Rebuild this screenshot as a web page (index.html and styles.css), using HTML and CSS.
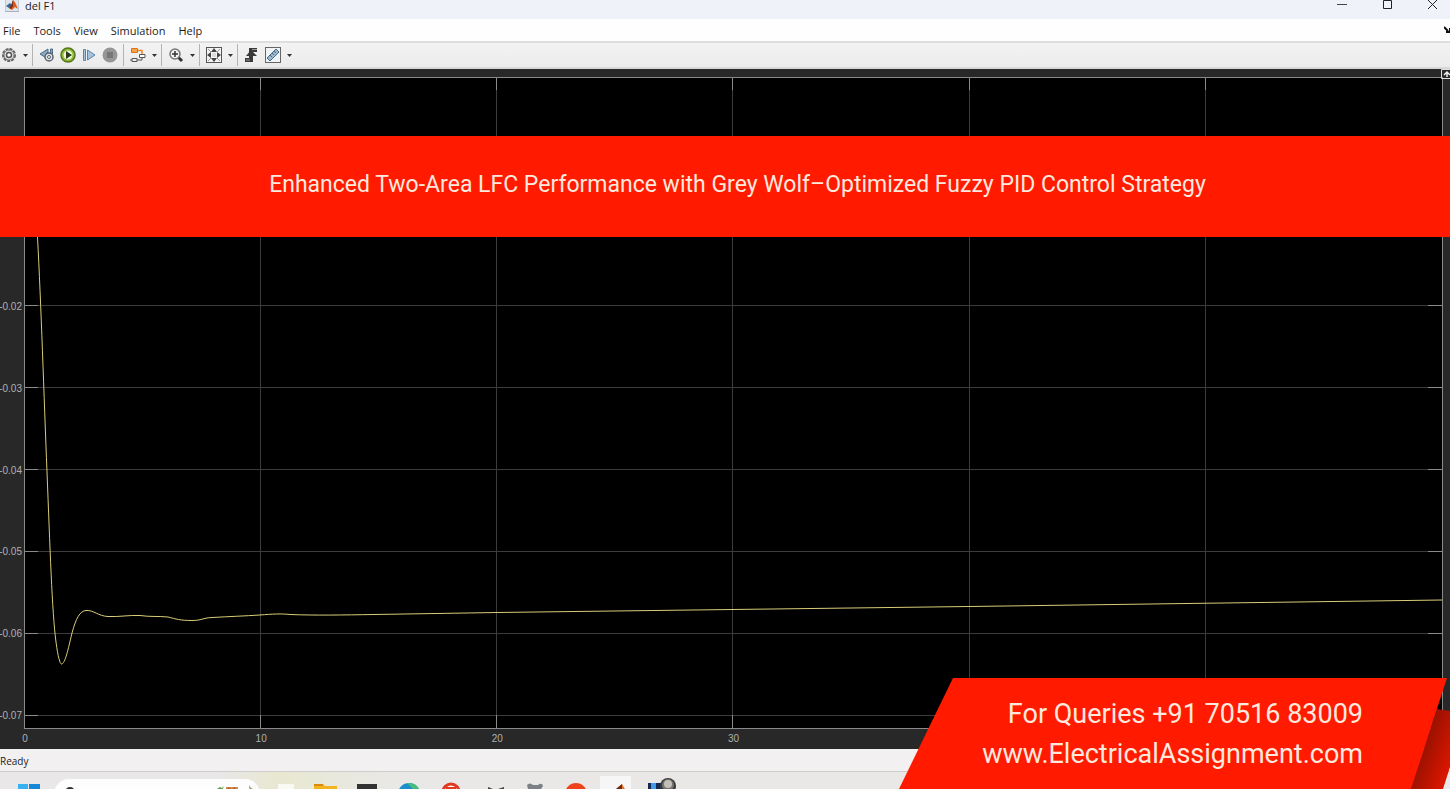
FILE: index.html
```html
<!DOCTYPE html>
<html lang="en">
<head>
<meta charset="utf-8">
<title>del F1</title>
<link rel="stylesheet" href="styles.css">
</head>

<body>
<header class="titlebar">
  <svg class="app-icon" width="14" height="12" viewBox="0 0 14 12">
    <rect width="14" height="12" fill="#dfe5ec"/>
    <path d="M0 0V11.5H14V0" fill="none" stroke="#a9b0ba"/>
    <path d="M1 6L5 3L7 5L4 8Z" fill="#36669a"/>
    <path d="M4 8Q7 5 8 0Q10 1 13 9L10 7L7 10Z" fill="#d85a1e"/>
    <path d="M4 8Q7 5 8 0L8 6L6 9Z" fill="#7b2c16"/>
  </svg>
  <span class="title">del F1</span>
  <div class="window-buttons">
    <button type="button" aria-label="Minimize"><svg width="12" height="10" viewBox="0 0 12 10"><path d="M1 4.5H11" stroke="#444"/></svg></button>
    <button type="button" aria-label="Maximize"><svg width="12" height="10" viewBox="0 0 12 10"><path d="M2.5 .5H10.500V8.500H2.500Z" fill="none" stroke="#222"/></svg></button>
    <button type="button" aria-label="Close"><svg width="12" height="10" viewBox="0 0 12 10"><path d="M2 0L11 9M11 0L2 9" stroke="#222"/></svg></button>
  </div>
</header>

<nav class="menubar">
  <button type="button">File</button>
  <button type="button">Tools</button>
  <button type="button">View</button>
  <button type="button">Simulation</button>
  <button type="button">Help</button>
  <svg class="dock" width="6" height="8" viewBox="0 0 6 8"><path d="M0 1L4 5M6 2V6H2" fill="none" stroke="#111" stroke-width="2"/></svg>
</nav>

<div class="toolbar">
  <div class="group">
    <div class="split">
      <button type="button" class="tool" aria-label="Settings">
        <svg width="16" height="16" viewBox="0 0 16 16">
          <circle cx="8" cy="8" r="6" fill="#ddd" stroke="#666" stroke-width="2" stroke-dasharray="3 1"/>
          <circle cx="8" cy="8" r="5" fill="#e4e4e4" stroke="#777"/>
          <circle cx="8" cy="8" r="2.500" fill="#fff" stroke="#555" stroke-width="1.500"/>
        </svg>
      </button>
      <button type="button" class="drop" aria-label="Settings menu"><svg width="5" height="3" viewBox="0 0 5 3"><path d="M0 0H5L2.500 3Z"/></svg></button>
    </div>
  </div>
  <div class="group">
    <button type="button" class="tool" aria-label="Step back options">
      <svg width="16" height="16" viewBox="0 0 16 16">
        <path d="M1 7L9 2V12Z" fill="#8aa9c4" stroke="#4d6b86"/>
        <path d="M11.500 2H13.500V8H11.500Z" fill="#8aa9c4" stroke="#4d6b86"/>
        <circle cx="10" cy="10" r="4" fill="#dfe3e6" stroke="#56636e" stroke-width="1.500"/>
        <circle cx="10" cy="10" r="1.500" fill="#fff" stroke="#56636e"/>
      </svg>
    </button>
    <button type="button" class="tool" aria-label="Run">
      <svg width="16" height="16" viewBox="0 0 16 16">
        <circle cx="8" cy="8" r="7" fill="#8dbb35" stroke="#55761c" stroke-width="1.500"/>
        <circle cx="8" cy="8" r="4.500" fill="#eef5d8"/>
        <path d="M6 4L12 8L6 12Z" fill="#2b3d18"/>
      </svg>
    </button>
    <button type="button" class="tool" aria-label="Step forward">
      <svg width="16" height="16" viewBox="0 0 16 16">
        <path d="M2.500 2.500H4.500V13.500H2.500Z" fill="#a9c6df" stroke="#5d83a5"/>
        <path d="M6.500 3L14 8L6.500 13Z" fill="#a3c4e0" stroke="#5d83a5"/>
      </svg>
    </button>
    <button type="button" class="tool" aria-label="Stop">
      <svg width="16" height="16" viewBox="0 0 16 16">
        <circle cx="8" cy="8" r="7.500" fill="#969696"/>
        <rect x="5" y="5" width="6" height="6" fill="#777"/>
      </svg>
    </button>
  </div>
  <div class="group">
    <div class="split">
      <button type="button" class="tool" aria-label="Highlight block">
        <svg width="16" height="16" viewBox="0 0 16 16">
          <path d="M1.500 1.500H7.500V5.500H1.500Z" fill="#f4a34a" stroke="#d9741a"/>
          <path d="M8 3.500H12V7" fill="none" stroke="#e58a2e" stroke-width="1.500"/>
          <path d="M9.500 7.500H15V10.500H9.500Z" fill="#fff" stroke="#555"/>
          <path d="M2 11.500H7V14.500H2ZM7 13H12V11M0 13H2" fill="none" stroke="#555"/>
        </svg>
      </button>
      <button type="button" class="drop" aria-label="Highlight menu"><svg width="5" height="3" viewBox="0 0 5 3"><path d="M0 0H5L2.500 3Z"/></svg></button>
    </div>
  </div>
  <div class="group">
    <div class="split">
      <button type="button" class="tool" aria-label="Zoom">
        <svg width="16" height="16" viewBox="0 0 16 16">
          <path d="M10 10L14 14" stroke="#333" stroke-width="3"/>
          <circle cx="7" cy="7" r="5" fill="#eef2f4" stroke="#777" stroke-width="1.500"/>
          <path d="M4 7H10M7 4V10" stroke="#333" stroke-width="1.500"/>
        </svg>
      </button>
      <button type="button" class="drop" aria-label="Zoom menu"><svg width="5" height="3" viewBox="0 0 5 3"><path d="M0 0H5L2.500 3Z"/></svg></button>
    </div>
  </div>
  <div class="group">
    <div class="split">
      <button type="button" class="tool" aria-label="Scale axes">
        <svg width="16" height="16" viewBox="0 0 16 16">
          <rect x=".5" y=".5" width="15" height="15" fill="#f4f4f4" stroke="#555"/>
          <path d="M8 1L11 5H5ZM8 15L5 11H11ZM1 8L5 5V11ZM15 8L11 11V5Z" fill="#444"/>
          <path d="M2 2L5 5M14 2L11 5M2 14L5 11M14 14L11 11" stroke="#999"/>
          <rect x="6" y="6" width="4" height="4" fill="#ddd"/>
        </svg>
      </button>
      <button type="button" class="drop" aria-label="Scale menu"><svg width="5" height="3" viewBox="0 0 5 3"><path d="M0 0H5L2.500 3Z"/></svg></button>
    </div>
  </div>
  <div class="group">
    <button type="button" class="tool" aria-label="Triggers">
      <svg width="16" height="16" viewBox="0 0 16 16">
        <path d="M1 13H7V3H13" fill="none" stroke="#3a3a3a" stroke-width="4"/>
        <path d="M7 3L13 9H2Z" fill="#3a3a3a"/>
        <path d="M2 13H6M8 2.500H13" stroke="#999"/>
      </svg>
    </button>
    <div class="split">
      <button type="button" class="tool" aria-label="Measurements">
        <svg width="16" height="16" viewBox="0 0 16 16">
          <rect x=".5" y=".5" width="15" height="15" fill="#f1f4f6" stroke="#666"/>
          <path d="M2 11L11 2L14 5L5 14Z" fill="#9db9d0" stroke="#4d6a84"/>
          <path d="M5 8L7 10M7 6L9 8M9 4L11 6" stroke="#4d6a84"/>
        </svg>
      </button>
      <button type="button" class="drop" aria-label="Measurements menu"><svg width="5" height="3" viewBox="0 0 5 3"><path d="M0 0H5L2.500 3Z"/></svg></button>
    </div>
  </div>
</div>

<main class="scope">
  <div class="y-axis">
    <span>-0.02</span>
    <span>-0.03</span>
    <span>-0.04</span>
    <span>-0.05</span>
    <span>-0.06</span>
    <span>-0.07</span>
  </div>
  <svg class="plot" viewBox="1 1 1417 650" preserveAspectRatio="none" role="img" aria-label="Frequency deviation of area 1">
    <g class="grid-lines">
      <path d="M236.500 0V651M472.500 0V651M708.500 0V651M945.500 0V651M1181.500 0V651"/>
      <path d="M0 228.500H1418M0 310.500H1418M0 392H1418M0 474H1418M0 556H1418M0 638H1418"/>
    </g>
    <g class="ticks">
      <path d="M236.500 0V13M472.500 0V13M708.500 0V13M945.500 0V13M1181.500 0V13"/>
      <path d="M236.500 638V651M472.500 638V651M708.500 638V651"/>
      <path d="M0 228.500H14M0 310.500H14M0 392H14M0 474H14M0 556H14M0 638H14"/>
      <path d="M1404 228.500H1418M1404 310.500H1418M1404 392H1418M1404 474H1418M1404 556H1418"/>
    </g>
    <path class="signal" d="M0 65C6 80 11 120 13.500 160C17 225 20 320 23 395C26 470 28 535 32 565C34 580 36 587 37.500 587C41 587 44 573 48 556C52 541 56 534 62 533.500C70 533 74 539 84 539.500C96 540 104 538 116 538.500C126 540 134 539 144 540C152 542 156 543.500 168 543.500C178 543.500 178 541 188 540.500C206 539.500 220 539 236 538C248 537 258 536.500 266 537.500C290 538.500 320 538 350 537.500L473 535.500L945 529.500L1418 523"/>
  </svg>
  <button type="button" class="legend-toggle" aria-label="Maximize axes">
    <svg width="9" height="10" viewBox="0 0 9 10"><path d="M.5 .5H9M.5 .5V9.500H9" fill="none" stroke="#ddd"/><path d="M3 6L6 3L9 6M6 3V8" fill="none" stroke="#eee" stroke-width="1.500"/></svg>
  </button>
  <div class="x-axis">
    <span>0</span>
    <span>10</span>
    <span>20</span>
    <span>30</span>
  </div>
</main>

<div class="statusbar">Ready</div>

<footer class="taskbar">
  <svg class="task" width="42" height="17" viewBox="0 0 42 17"><path d="M10 12H20V17H10Z" fill="#35b2ef"/><path d="M21 12H32V17H21Z" fill="#1686d9"/></svg>
  <label class="search">
    <svg width="12" height="14" viewBox="0 0 12 14"><circle cx="6" cy="13" r="4" fill="none" stroke="#333" stroke-width="2"/></svg>
    <input type="search" aria-label="Search">
    <svg width="44" height="14" viewBox="0 0 44 14"><path d="M3 10L6 8L8 9L10 7L7 14H5Z" fill="#5c9c46"/><path d="M12 8H24V14H12Z" fill="#d08a45"/><path d="M14 9L18 12L21 9" fill="none" stroke="#a4602f" stroke-width="2"/><path d="M35 6L37 9L41 11L39 14H36Z" fill="#9a9461"/></svg>
  </label>
  <svg class="task" width="42" height="17" viewBox="0 0 42 17"><path d="M15 12H31V17H15Z" fill="#fafaf5"/></svg>
  <svg class="task" width="42" height="17" viewBox="0 0 42 17"><path d="M9 12H18L20 14H32V17H9Z" fill="#f3b41d"/><path d="M9 12H18V14H9Z" fill="#d98a0c"/></svg>
  <svg class="task" width="42" height="17" viewBox="0 0 42 17"><rect x="10" y="12" width="20" height="5" fill="#333"/></svg>
  <svg class="task" width="42" height="17" viewBox="0 0 42 17"><circle cx="20" cy="22" r="11" fill="#1b8fc9"/><path d="M18 11Q28 10 31 19L24 17Z" fill="#46bd7b"/></svg>
  <svg class="task" width="42" height="17" viewBox="0 0 42 17"><circle cx="20" cy="20" r="8" fill="#fff" stroke="#e23a20" stroke-width="3"/><path d="M15 16H25" stroke="#e23a20" stroke-width="2"/></svg>
  <svg class="task" width="42" height="17" viewBox="0 0 42 17"><path d="M15 15L20 17H15ZM25 17L31 15V17Z" fill="#444"/></svg>
  <svg class="task" width="42" height="17" viewBox="0 0 42 17"><path d="M12 13Q15 10 18 13H23Q27 10 28 14L26 17H13Z" fill="#7b8186"/></svg>
  <svg class="task" width="42" height="17" viewBox="0 0 42 17"><circle cx="19" cy="22" r="11" fill="#ee421b"/></svg>
  <svg class="task" width="42" height="17" viewBox="0 0 42 17"><rect x="1" y="4" width="31" height="13" fill="#f6f6f6"/><path d="M17 17L23 12L26 17Z" fill="#e5772a"/><path d="M17 17L23 12V17Z" fill="#6b2b1b"/></svg>
  <svg class="task" width="42" height="17" viewBox="0 0 42 17"><rect x="7" y="11" width="19" height="6" fill="#15274f"/><rect x="10" y="11" width="5" height="6" fill="#3f9be8"/><circle cx="27" cy="14" r="8" fill="#3a3a3a"/><circle cx="27" cy="13" r="6" fill="#77736f"/><circle cx="27" cy="12" r="4" fill="#c2bfb9"/></svg>
</footer>

<div class="headline">Enhanced Two-Area LFC Performance with Grey Wolf–Optimized Fuzzy PID Control Strategy</div>

<aside class="contact">
  <div class="contact-fold"></div>
  <div class="contact-text">
    <div>For Queries +91 70516 83009</div>
    <div>www.ElectricalAssignment.com</div>
  </div>
</aside>
</body>
</html>
```
FILE: styles.css
```css
* {
  box-sizing: border-box;
}
body {
  margin: 0;
  height: 100vh;
  display: flex;
  flex-direction: column;
  position: relative;
  overflow: hidden;
  background: #282828;
  color: #1c1c1c;
  font: 11px "Open Sans", "Noto Sans", sans-serif;
}
button {
  padding: 0;
  border: 0;
  background: none;
  color: inherit;
  font: inherit;
}
svg {
  display: block;
}

/* window frame */
.titlebar {
  flex: none;
  height: 19px;
  display: flex;
  align-items: flex-start;
  padding-left: 5px;
  background: #f0f2f9;
}
.title {
  margin-left: 6px;
  line-height: 11px;
}
.window-buttons {
  margin-left: auto;
  display: flex;
  gap: 9px;
}
.window-buttons button {
  width: 36px;
  display: flex;
  justify-content: center;
}
.menubar {
  flex: none;
  height: 22px;
  display: flex;
  align-items: center;
  gap: 13px;
  padding-left: 3px;
  background: #fefefe;
}
.dock {
  margin-left: auto;
}

/* toolbar */
.toolbar {
  flex: none;
  height: 28px;
  display: flex;
  align-items: center;
  background: linear-gradient(#f3f3f3, #ebebeb);
  border-top: 2px solid #dedede;
  border-bottom: 2px solid #d8d8d8;
}
.group {
  display: flex;
  gap: 3px;
}
.group + .group {
  padding-left: 5px;
  border-left: 1px solid #b4b4b4;
}
.group > .tool:last-child {
  margin-right: 4px;
}
.split {
  display: flex;
}
.tool,
.drop {
  height: 22px;
  display: flex;
  align-items: center;
  justify-content: center;
}
.tool {
  width: 18px;
}
.drop {
  width: 14px;
}
.drop svg {
  fill: #333;
}

/* scope display */
.scope {
  flex: 1;
  min-height: 0;
  display: grid;
  grid-template: 9px minmax(0, 1fr) 21px / 25px minmax(0, 1fr) 8px;
  background: #282828;
  color: #b0b0b0;
  font: 10px/16px "Liberation Sans", Arial, sans-serif;
}
.y-axis {
  grid-area: 2 / 1;
  display: flex;
  flex-direction: column;
  justify-content: space-between;
  align-items: flex-end;
  padding: 221px 3px 4px 0;
}
.plot {
  grid-area: 2 / 2;
  width: 100%;
  height: 100%;
  background: #000;
  outline: 1px solid #8a8a8a;
}
.plot path {
  fill: none;
  vector-effect: non-scaling-stroke;
}
.grid-lines,
.ticks {
  shape-rendering: crispEdges;
}
.grid-lines {
  stroke: #3c3c3c;
}
.ticks {
  stroke: #8a8a8a;
}
.signal {
  stroke: #d9cd78;
}
.legend-toggle {
  grid-area: 1 / 3;
  justify-self: end;
  z-index: 1;
  height: 10px;
}
.x-axis {
  grid-area: 3 / 2;
  display: grid;
  grid-template-columns: repeat(6, 1fr);
  padding-top: 3px;
}
.x-axis span {
  width: 20px;
  margin-left: -10px;
  text-align: center;
}

.statusbar {
  flex: none;
  height: 23px;
  font-size: 10px;
  line-height: 24px;
  background: #f2f0f0;
  border-bottom: 1px solid #cfcccc;
}

/* taskbar, cut off by the bottom of the screen */
.taskbar {
  flex: none;
  height: 17px;
  display: flex;
  padding-left: 8px;
  overflow: hidden;
  background: linear-gradient(90deg, #e9e7e7 220px, #e8e8d0 280px, #e8e8dc 330px, #e9e8e7 400px);
}
.task {
  flex: none;
}
.search {
  width: 206px;
  height: 30px;
  display: flex;
  align-items: flex-start;
  margin: 7px 3px 0 4px;
  padding: 0 2px 0 10px;
  border-radius: 15px;
  background: #fdfdfd;
}
.search input {
  flex: 1;
  min-width: 0;
  height: 10px;
  padding: 0;
  border: 0;
  outline: 0;
  background: none;
}

/* video overlays */
.headline {
  position: absolute;
  top: 136px;
  left: 0;
  right: 0;
  height: 101px;
  padding: 0 0 5px 25px;
  display: flex;
  align-items: center;
  justify-content: center;
  background: #ff1a00;
  color: #ffe9df;
  font: 23px Roboto, sans-serif;
}
.contact {
  position: absolute;
  right: 0;
  bottom: 0;
  width: 551px;
  height: 111px;
}
.contact-fold {
  position: absolute;
  inset: 31px 0 0 auto;
  width: 40px;
  background: linear-gradient(110deg, #8d1000 30%, #d81600 85%);
  clip-path: polygon(27px 0, 100% 2px, 100% 58px, 33px 100%, 0 100%);
}
.contact-text {
  position: relative;
  height: 100%;
  padding: 16px 87px 0 0;
  background: #ff1a00;
  clip-path: polygon(54px 0, 548px 0, 512px 100%, 0 100%);
  color: #ffe9df;
  font: 27px/40px Roboto, sans-serif;
  text-align: right;
}
```
